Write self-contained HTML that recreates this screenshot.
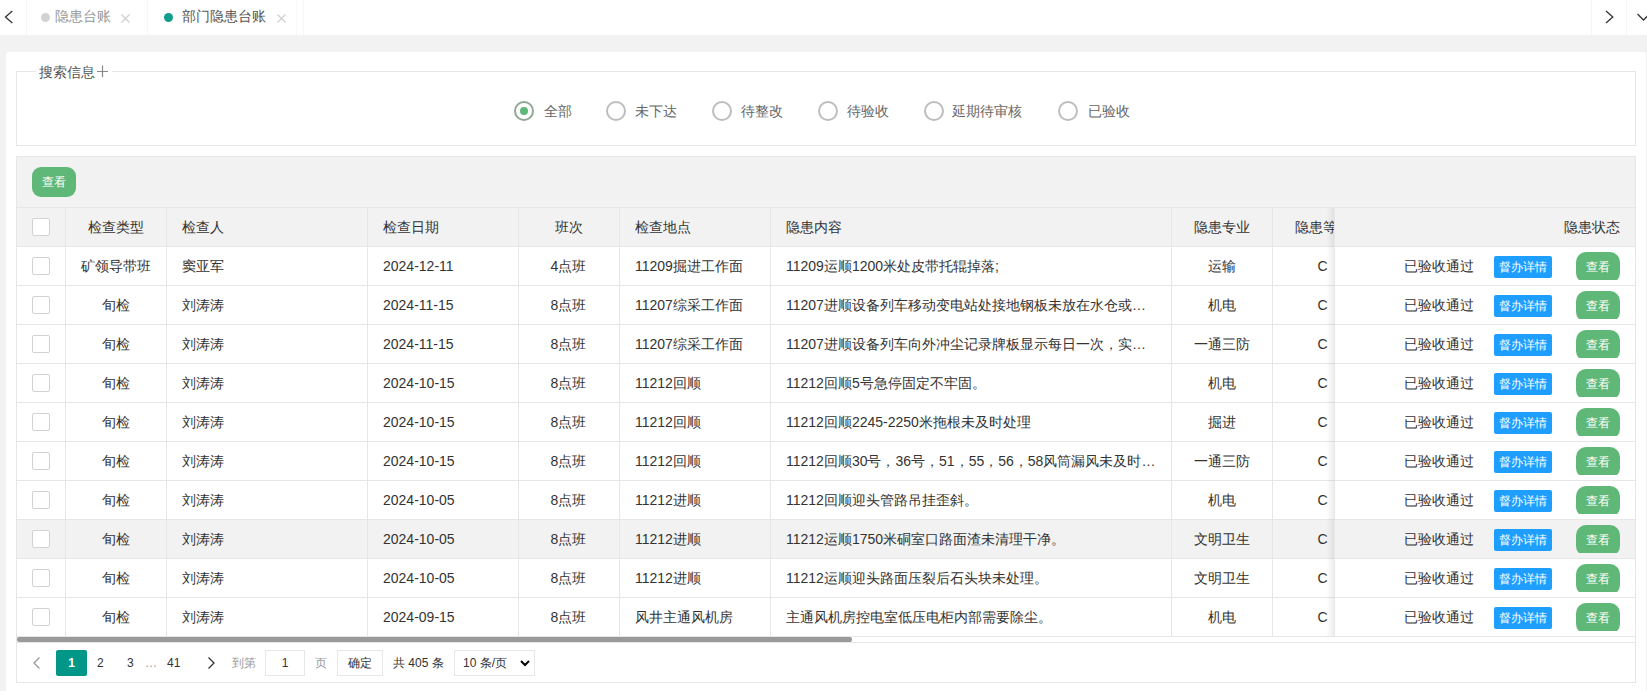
<!DOCTYPE html><html><head><meta charset="utf-8"><title>隐患台账</title><style>
*{box-sizing:border-box;margin:0;padding:0}
html,body{width:1647px;height:691px;overflow:hidden;background:#f2f2f2;font-family:"Liberation Sans",sans-serif;color:#333}
.a{position:absolute}
#tabs{left:0;top:0;width:1647px;height:35px;background:#fff}
.vl{position:absolute;top:0;width:1px;height:35px;background:#f6f6f6}
.dot{position:absolute;width:9px;height:9px;border-radius:50%}
.tt{position:absolute;top:8px;font-size:14px;line-height:17px;white-space:nowrap}
#card{left:6px;top:52px;width:1640px;height:660px;background:#fff;border-radius:3px}
#fs{left:16px;top:71px;width:1620px;height:75px;border:1px solid #e6e6e6}
#lg{left:36px;top:63px;height:18px;padding:0 3px;background:#fff;font-size:14px;line-height:18px;color:#555;white-space:nowrap}
.rd{position:absolute;top:101px;width:20px;height:20px;border:2px solid #bdbdbd;border-radius:50%}
.rd.on{border-color:#90a894}
.rd.on:after{content:"";position:absolute;left:50%;top:50%;width:8px;height:8px;margin:-4px 0 0 -4px;border-radius:50%;background:#5fb878}
.rt{position:absolute;top:103px;font-size:14px;line-height:17px;color:#666;white-space:nowrap}
#tbl{left:16px;top:156px;width:1620px;height:527px;border:1px solid #e6e6e6;background:#fff;overflow:hidden}
#tool{left:0;top:0;width:1618px;height:51px;background:#f2f2f2;border-bottom:1px solid #e6e6e6}
.gbtn{position:absolute;background:#5fb878;color:#fff;font-size:12px;text-align:center;border-radius:9px;font-weight:500}
.clip{position:absolute;overflow:hidden}
.bbtn{position:absolute;background:#1e9fff;color:#fff;font-size:12px;text-align:center;border-radius:2px;font-weight:500}
.cl{position:absolute;width:1px;background:#e6e6e6}
.hl{position:absolute;height:1px;background:#e6e6e6}
.c{position:absolute;font-size:14px;line-height:17px;white-space:nowrap;color:#333}
.cb{position:absolute;width:18px;height:18px;border:1px solid #d2d2d2;background:#fff;border-radius:2px}
i{font-style:normal;display:inline-block;width:1em;text-align:center}
.pg{position:absolute;font-size:12px;line-height:14px;white-space:nowrap;color:#333}
</style></head><body>
<div id="tabs" class="a">
<svg class="a" style="left:0;top:0" width="26" height="35"><path d="M12.3 11 L5.5 17 L12.3 23" fill="none" stroke="#333" stroke-width="1.3"/></svg>
<div class="vl" style="left:26px"></div>
<div class="dot" style="left:41px;top:13px;background:#d2d2d2"></div>
<div class="tt" style="left:55px;color:#999"><i>隐</i><i>患</i><i>台</i><i>账</i></div>
<svg class="a" style="left:120px;top:13px" width="11" height="11"><path d="M1.5 1.5 L9.5 9.5 M9.5 1.5 L1.5 9.5" stroke="#cfcfcf" stroke-width="1.2"/></svg>
<div class="vl" style="left:147px"></div>
<div class="dot" style="left:164px;top:13px;background:#149c8c"></div>
<div class="tt" style="left:182px;color:#555"><i>部</i><i>门</i><i>隐</i><i>患</i><i>台</i><i>账</i></div>
<svg class="a" style="left:276px;top:13px" width="11" height="11"><path d="M1.5 1.5 L9.5 9.5 M9.5 1.5 L1.5 9.5" stroke="#cfcfcf" stroke-width="1.2"/></svg>
<div class="vl" style="left:296px;background:#f8f8f8"></div>
<div class="vl" style="left:303px"></div>
<div class="vl" style="left:1591px"></div>
<svg class="a" style="left:1600px;top:0" width="20" height="35"><path d="M6 11 L12.8 17 L6 23" fill="none" stroke="#333" stroke-width="1.3"/></svg>
<div class="vl" style="left:1626px"></div>
<svg class="a" style="left:1630px;top:0" width="17" height="35"><path d="M7.5 14 L13.5 20 L19.5 14" fill="none" stroke="#333" stroke-width="1.3"/></svg>
</div>
<div id="card" class="a"></div>
<div id="fs" class="a"></div>
<div id="lg" class="a"><i>搜</i><i>索</i><i>信</i><i>息</i></div>
<div class="a" style="left:95px;top:63px;width:17px;height:16px;background:#fff"></div>
<svg class="a" style="left:96px;top:65px" width="13" height="13"><path d="M6.5 0.5 V12 M1 6.5 H12" stroke="#888" stroke-width="1.2"/></svg>
<div class="rd on" style="left:514.0px"></div>
<div class="rt" style="left:543.7px"><i>全</i><i>部</i></div>
<div class="rd" style="left:606.0px"></div>
<div class="rt" style="left:635.4px"><i>未</i><i>下</i><i>达</i></div>
<div class="rd" style="left:711.5px"></div>
<div class="rt" style="left:741.0px"><i>待</i><i>整</i><i>改</i></div>
<div class="rd" style="left:818.0px"></div>
<div class="rt" style="left:847.2px"><i>待</i><i>验</i><i>收</i></div>
<div class="rd" style="left:923.5px"></div>
<div class="rt" style="left:952.4px"><i>延</i><i>期</i><i>待</i><i>审</i><i>核</i></div>
<div class="rd" style="left:1057.5px"></div>
<div class="rt" style="left:1087.7px"><i>已</i><i>验</i><i>收</i></div>
<div id="tbl" class="a">
<div id="tool" class="a"></div>
<div class="gbtn" style="left:15px;top:10px;width:44px;height:30px;line-height:30px"><i>查</i><i>看</i></div>
<div class="a" style="left:0;top:51px;width:1618px;height:38px;background:#f2f2f2"></div>
<div class="a" style="left:0;top:362px;width:1618px;height:39px;background:#f2f2f2"></div>
<div class="hl" style="left:0;top:89px;width:1618px"></div>
<div class="hl" style="left:0;top:128px;width:1618px"></div>
<div class="hl" style="left:0;top:167px;width:1618px"></div>
<div class="hl" style="left:0;top:206px;width:1618px"></div>
<div class="hl" style="left:0;top:245px;width:1618px"></div>
<div class="hl" style="left:0;top:284px;width:1618px"></div>
<div class="hl" style="left:0;top:323px;width:1618px"></div>
<div class="hl" style="left:0;top:362px;width:1618px"></div>
<div class="hl" style="left:0;top:401px;width:1618px"></div>
<div class="hl" style="left:0;top:440px;width:1618px"></div>
<div class="hl" style="left:0;top:479px;width:1618px"></div>
<div class="cl" style="left:48px;top:50px;height:429px"></div>
<div class="cl" style="left:149px;top:50px;height:429px"></div>
<div class="cl" style="left:350px;top:50px;height:429px"></div>
<div class="cl" style="left:501px;top:50px;height:429px"></div>
<div class="cl" style="left:602px;top:50px;height:429px"></div>
<div class="cl" style="left:753px;top:50px;height:429px"></div>
<div class="cl" style="left:1154px;top:50px;height:429px"></div>
<div class="cl" style="left:1255px;top:50px;height:429px"></div>
<div class="cl" style="left:1356px;top:50px;height:429px"></div>
<div class="cb" style="left:15px;top:61px"></div>
<div class="c" style="left:49px;top:62px;width:100px;text-align:center"><i>检</i><i>查</i><i>类</i><i>型</i></div>
<div class="c" style="left:165px;top:62px;"><i>检</i><i>查</i><i>人</i></div>
<div class="c" style="left:366px;top:62px;"><i>检</i><i>查</i><i>日</i><i>期</i></div>
<div class="c" style="left:501px;top:62px;width:101px;text-align:center"><i>班</i><i>次</i></div>
<div class="c" style="left:618px;top:62px;"><i>检</i><i>查</i><i>地</i><i>点</i></div>
<div class="c" style="left:769px;top:62px;"><i>隐</i><i>患</i><i>内</i><i>容</i></div>
<div class="c" style="left:1154px;top:62px;width:101px;text-align:center"><i>隐</i><i>患</i><i>专</i><i>业</i></div>
<div class="c" style="left:1255px;top:62px;width:101px;text-align:center"><i>隐</i><i>患</i><i>等</i><i>级</i></div>
<div class="cb" style="left:15px;top:100px"></div>
<div class="c" style="left:49px;top:101px;width:100px;text-align:center"><i>矿</i><i>领</i><i>导</i><i>带</i><i>班</i></div>
<div class="c" style="left:165px;top:101px;"><i>窦</i><i>亚</i><i>军</i></div>
<div class="c" style="left:366px;top:101px;">2024-12-11</div>
<div class="c" style="left:501px;top:101px;width:101px;text-align:center">4<i>点</i><i>班</i></div>
<div class="c" style="left:618px;top:101px;">11209<i>掘</i><i>进</i><i>工</i><i>作</i><i>面</i></div>
<div class="c" style="left:769px;top:101px;">11209<i>运</i><i>顺</i>1200<i>米</i><i>处</i><i>皮</i><i>带</i><i>托</i><i>辊</i><i>掉</i><i>落</i>;</div>
<div class="c" style="left:1154px;top:101px;width:101px;text-align:center"><i>运</i><i>输</i></div>
<div class="c" style="left:1255px;top:101px;width:101px;text-align:center">C</div>
<div class="cb" style="left:15px;top:139px"></div>
<div class="c" style="left:49px;top:140px;width:100px;text-align:center"><i>旬</i><i>检</i></div>
<div class="c" style="left:165px;top:140px;"><i>刘</i><i>涛</i><i>涛</i></div>
<div class="c" style="left:366px;top:140px;">2024-11-15</div>
<div class="c" style="left:501px;top:140px;width:101px;text-align:center">8<i>点</i><i>班</i></div>
<div class="c" style="left:618px;top:140px;">11207<i>综</i><i>采</i><i>工</i><i>作</i><i>面</i></div>
<div class="c" style="left:769px;top:140px;">11207<i>进</i><i>顺</i><i>设</i><i>备</i><i>列</i><i>车</i><i>移</i><i>动</i><i>变</i><i>电</i><i>站</i><i>处</i><i>接</i><i>地</i><i>钢</i><i>板</i><i>未</i><i>放</i><i>在</i><i>水</i><i>仓</i><i>或</i>…</div>
<div class="c" style="left:1154px;top:140px;width:101px;text-align:center"><i>机</i><i>电</i></div>
<div class="c" style="left:1255px;top:140px;width:101px;text-align:center">C</div>
<div class="cb" style="left:15px;top:178px"></div>
<div class="c" style="left:49px;top:179px;width:100px;text-align:center"><i>旬</i><i>检</i></div>
<div class="c" style="left:165px;top:179px;"><i>刘</i><i>涛</i><i>涛</i></div>
<div class="c" style="left:366px;top:179px;">2024-11-15</div>
<div class="c" style="left:501px;top:179px;width:101px;text-align:center">8<i>点</i><i>班</i></div>
<div class="c" style="left:618px;top:179px;">11207<i>综</i><i>采</i><i>工</i><i>作</i><i>面</i></div>
<div class="c" style="left:769px;top:179px;">11207<i>进</i><i>顺</i><i>设</i><i>备</i><i>列</i><i>车</i><i>向</i><i>外</i><i>冲</i><i>尘</i><i>记</i><i>录</i><i>牌</i><i>板</i><i>显</i><i>示</i><i>每</i><i>日</i><i>一</i><i>次</i><i>，</i><i>实</i>…</div>
<div class="c" style="left:1154px;top:179px;width:101px;text-align:center"><i>一</i><i>通</i><i>三</i><i>防</i></div>
<div class="c" style="left:1255px;top:179px;width:101px;text-align:center">C</div>
<div class="cb" style="left:15px;top:217px"></div>
<div class="c" style="left:49px;top:218px;width:100px;text-align:center"><i>旬</i><i>检</i></div>
<div class="c" style="left:165px;top:218px;"><i>刘</i><i>涛</i><i>涛</i></div>
<div class="c" style="left:366px;top:218px;">2024-10-15</div>
<div class="c" style="left:501px;top:218px;width:101px;text-align:center">8<i>点</i><i>班</i></div>
<div class="c" style="left:618px;top:218px;">11212<i>回</i><i>顺</i></div>
<div class="c" style="left:769px;top:218px;">11212<i>回</i><i>顺</i>5<i>号</i><i>急</i><i>停</i><i>固</i><i>定</i><i>不</i><i>牢</i><i>固</i><i>。</i></div>
<div class="c" style="left:1154px;top:218px;width:101px;text-align:center"><i>机</i><i>电</i></div>
<div class="c" style="left:1255px;top:218px;width:101px;text-align:center">C</div>
<div class="cb" style="left:15px;top:256px"></div>
<div class="c" style="left:49px;top:257px;width:100px;text-align:center"><i>旬</i><i>检</i></div>
<div class="c" style="left:165px;top:257px;"><i>刘</i><i>涛</i><i>涛</i></div>
<div class="c" style="left:366px;top:257px;">2024-10-15</div>
<div class="c" style="left:501px;top:257px;width:101px;text-align:center">8<i>点</i><i>班</i></div>
<div class="c" style="left:618px;top:257px;">11212<i>回</i><i>顺</i></div>
<div class="c" style="left:769px;top:257px;">11212<i>回</i><i>顺</i>2245-2250<i>米</i><i>拖</i><i>根</i><i>未</i><i>及</i><i>时</i><i>处</i><i>理</i></div>
<div class="c" style="left:1154px;top:257px;width:101px;text-align:center"><i>掘</i><i>进</i></div>
<div class="c" style="left:1255px;top:257px;width:101px;text-align:center">C</div>
<div class="cb" style="left:15px;top:295px"></div>
<div class="c" style="left:49px;top:296px;width:100px;text-align:center"><i>旬</i><i>检</i></div>
<div class="c" style="left:165px;top:296px;"><i>刘</i><i>涛</i><i>涛</i></div>
<div class="c" style="left:366px;top:296px;">2024-10-15</div>
<div class="c" style="left:501px;top:296px;width:101px;text-align:center">8<i>点</i><i>班</i></div>
<div class="c" style="left:618px;top:296px;">11212<i>回</i><i>顺</i></div>
<div class="c" style="left:769px;top:296px;">11212<i>回</i><i>顺</i>30<i>号</i><i>，</i>36<i>号</i><i>，</i>51<i>，</i>55<i>，</i>56<i>，</i>58<i>风</i><i>筒</i><i>漏</i><i>风</i><i>未</i><i>及</i><i>时</i>…</div>
<div class="c" style="left:1154px;top:296px;width:101px;text-align:center"><i>一</i><i>通</i><i>三</i><i>防</i></div>
<div class="c" style="left:1255px;top:296px;width:101px;text-align:center">C</div>
<div class="cb" style="left:15px;top:334px"></div>
<div class="c" style="left:49px;top:335px;width:100px;text-align:center"><i>旬</i><i>检</i></div>
<div class="c" style="left:165px;top:335px;"><i>刘</i><i>涛</i><i>涛</i></div>
<div class="c" style="left:366px;top:335px;">2024-10-05</div>
<div class="c" style="left:501px;top:335px;width:101px;text-align:center">8<i>点</i><i>班</i></div>
<div class="c" style="left:618px;top:335px;">11212<i>进</i><i>顺</i></div>
<div class="c" style="left:769px;top:335px;">11212<i>回</i><i>顺</i><i>迎</i><i>头</i><i>管</i><i>路</i><i>吊</i><i>挂</i><i>歪</i><i>斜</i><i>。</i></div>
<div class="c" style="left:1154px;top:335px;width:101px;text-align:center"><i>机</i><i>电</i></div>
<div class="c" style="left:1255px;top:335px;width:101px;text-align:center">C</div>
<div class="cb" style="left:15px;top:373px"></div>
<div class="c" style="left:49px;top:374px;width:100px;text-align:center"><i>旬</i><i>检</i></div>
<div class="c" style="left:165px;top:374px;"><i>刘</i><i>涛</i><i>涛</i></div>
<div class="c" style="left:366px;top:374px;">2024-10-05</div>
<div class="c" style="left:501px;top:374px;width:101px;text-align:center">8<i>点</i><i>班</i></div>
<div class="c" style="left:618px;top:374px;">11212<i>进</i><i>顺</i></div>
<div class="c" style="left:769px;top:374px;">11212<i>运</i><i>顺</i>1750<i>米</i><i>硐</i><i>室</i><i>口</i><i>路</i><i>面</i><i>渣</i><i>未</i><i>清</i><i>理</i><i>干</i><i>净</i><i>。</i></div>
<div class="c" style="left:1154px;top:374px;width:101px;text-align:center"><i>文</i><i>明</i><i>卫</i><i>生</i></div>
<div class="c" style="left:1255px;top:374px;width:101px;text-align:center">C</div>
<div class="cb" style="left:15px;top:412px"></div>
<div class="c" style="left:49px;top:413px;width:100px;text-align:center"><i>旬</i><i>检</i></div>
<div class="c" style="left:165px;top:413px;"><i>刘</i><i>涛</i><i>涛</i></div>
<div class="c" style="left:366px;top:413px;">2024-10-05</div>
<div class="c" style="left:501px;top:413px;width:101px;text-align:center">8<i>点</i><i>班</i></div>
<div class="c" style="left:618px;top:413px;">11212<i>进</i><i>顺</i></div>
<div class="c" style="left:769px;top:413px;">11212<i>运</i><i>顺</i><i>迎</i><i>头</i><i>路</i><i>面</i><i>压</i><i>裂</i><i>后</i><i>石</i><i>头</i><i>块</i><i>未</i><i>处</i><i>理</i><i>。</i></div>
<div class="c" style="left:1154px;top:413px;width:101px;text-align:center"><i>文</i><i>明</i><i>卫</i><i>生</i></div>
<div class="c" style="left:1255px;top:413px;width:101px;text-align:center">C</div>
<div class="cb" style="left:15px;top:451px"></div>
<div class="c" style="left:49px;top:452px;width:100px;text-align:center"><i>旬</i><i>检</i></div>
<div class="c" style="left:165px;top:452px;"><i>刘</i><i>涛</i><i>涛</i></div>
<div class="c" style="left:366px;top:452px;">2024-09-15</div>
<div class="c" style="left:501px;top:452px;width:101px;text-align:center">8<i>点</i><i>班</i></div>
<div class="c" style="left:618px;top:452px;"><i>风</i><i>井</i><i>主</i><i>通</i><i>风</i><i>机</i><i>房</i></div>
<div class="c" style="left:769px;top:452px;"><i>主</i><i>通</i><i>风</i><i>机</i><i>房</i><i>控</i><i>电</i><i>室</i><i>低</i><i>压</i><i>电</i><i>柜</i><i>内</i><i>部</i><i>需</i><i>要</i><i>除</i><i>尘</i><i>。</i></div>
<div class="c" style="left:1154px;top:452px;width:101px;text-align:center"><i>机</i><i>电</i></div>
<div class="c" style="left:1255px;top:452px;width:101px;text-align:center">C</div>
<div class="a" style="left:1317px;top:51px;width:301px;height:428px;background:#fff"></div>
<div class="a" style="left:1309px;top:51px;width:8px;height:428px;background:linear-gradient(to left,rgba(0,0,0,.07),rgba(0,0,0,0))"></div>
<div class="a" style="left:1317px;top:51px;width:301px;height:38px;background:#f2f2f2"></div>
<div class="a" style="left:1317px;top:362px;width:301px;height:39px;background:#f2f2f2"></div>
<div class="hl" style="left:1317px;top:89px;width:301px"></div>
<div class="hl" style="left:1317px;top:128px;width:301px"></div>
<div class="hl" style="left:1317px;top:167px;width:301px"></div>
<div class="hl" style="left:1317px;top:206px;width:301px"></div>
<div class="hl" style="left:1317px;top:245px;width:301px"></div>
<div class="hl" style="left:1317px;top:284px;width:301px"></div>
<div class="hl" style="left:1317px;top:323px;width:301px"></div>
<div class="hl" style="left:1317px;top:362px;width:301px"></div>
<div class="hl" style="left:1317px;top:401px;width:301px"></div>
<div class="hl" style="left:1317px;top:440px;width:301px"></div>
<div class="hl" style="left:1317px;top:479px;width:301px"></div>
<div class="cl" style="left:1317px;top:50px;height:429px"></div>
<div class="c" style="left:1317px;top:62px;width:286px;text-align:right"><i>隐</i><i>患</i><i>状</i><i>态</i></div>
<div class="c" style="left:1317px;top:101px;width:140px;text-align:right"><i>已</i><i>验</i><i>收</i><i>通</i><i>过</i></div>
<div class="bbtn" style="left:1477px;top:99px;width:58px;height:22px;line-height:22px"><i>督</i><i>办</i><i>详</i><i>情</i></div>
<div class="clip" style="left:1559px;top:95px;width:44px;height:28px"><div class="gbtn" style="left:0;top:0;width:44px;height:31px;line-height:31px;border-radius:10px"><i>查</i><i>看</i></div></div>
<div class="c" style="left:1317px;top:140px;width:140px;text-align:right"><i>已</i><i>验</i><i>收</i><i>通</i><i>过</i></div>
<div class="bbtn" style="left:1477px;top:138px;width:58px;height:22px;line-height:22px"><i>督</i><i>办</i><i>详</i><i>情</i></div>
<div class="clip" style="left:1559px;top:134px;width:44px;height:28px"><div class="gbtn" style="left:0;top:0;width:44px;height:31px;line-height:31px;border-radius:10px"><i>查</i><i>看</i></div></div>
<div class="c" style="left:1317px;top:179px;width:140px;text-align:right"><i>已</i><i>验</i><i>收</i><i>通</i><i>过</i></div>
<div class="bbtn" style="left:1477px;top:177px;width:58px;height:22px;line-height:22px"><i>督</i><i>办</i><i>详</i><i>情</i></div>
<div class="clip" style="left:1559px;top:173px;width:44px;height:28px"><div class="gbtn" style="left:0;top:0;width:44px;height:31px;line-height:31px;border-radius:10px"><i>查</i><i>看</i></div></div>
<div class="c" style="left:1317px;top:218px;width:140px;text-align:right"><i>已</i><i>验</i><i>收</i><i>通</i><i>过</i></div>
<div class="bbtn" style="left:1477px;top:216px;width:58px;height:22px;line-height:22px"><i>督</i><i>办</i><i>详</i><i>情</i></div>
<div class="clip" style="left:1559px;top:212px;width:44px;height:28px"><div class="gbtn" style="left:0;top:0;width:44px;height:31px;line-height:31px;border-radius:10px"><i>查</i><i>看</i></div></div>
<div class="c" style="left:1317px;top:257px;width:140px;text-align:right"><i>已</i><i>验</i><i>收</i><i>通</i><i>过</i></div>
<div class="bbtn" style="left:1477px;top:255px;width:58px;height:22px;line-height:22px"><i>督</i><i>办</i><i>详</i><i>情</i></div>
<div class="clip" style="left:1559px;top:251px;width:44px;height:28px"><div class="gbtn" style="left:0;top:0;width:44px;height:31px;line-height:31px;border-radius:10px"><i>查</i><i>看</i></div></div>
<div class="c" style="left:1317px;top:296px;width:140px;text-align:right"><i>已</i><i>验</i><i>收</i><i>通</i><i>过</i></div>
<div class="bbtn" style="left:1477px;top:294px;width:58px;height:22px;line-height:22px"><i>督</i><i>办</i><i>详</i><i>情</i></div>
<div class="clip" style="left:1559px;top:290px;width:44px;height:28px"><div class="gbtn" style="left:0;top:0;width:44px;height:31px;line-height:31px;border-radius:10px"><i>查</i><i>看</i></div></div>
<div class="c" style="left:1317px;top:335px;width:140px;text-align:right"><i>已</i><i>验</i><i>收</i><i>通</i><i>过</i></div>
<div class="bbtn" style="left:1477px;top:333px;width:58px;height:22px;line-height:22px"><i>督</i><i>办</i><i>详</i><i>情</i></div>
<div class="clip" style="left:1559px;top:329px;width:44px;height:28px"><div class="gbtn" style="left:0;top:0;width:44px;height:31px;line-height:31px;border-radius:10px"><i>查</i><i>看</i></div></div>
<div class="c" style="left:1317px;top:374px;width:140px;text-align:right"><i>已</i><i>验</i><i>收</i><i>通</i><i>过</i></div>
<div class="bbtn" style="left:1477px;top:372px;width:58px;height:22px;line-height:22px"><i>督</i><i>办</i><i>详</i><i>情</i></div>
<div class="clip" style="left:1559px;top:368px;width:44px;height:28px"><div class="gbtn" style="left:0;top:0;width:44px;height:31px;line-height:31px;border-radius:10px"><i>查</i><i>看</i></div></div>
<div class="c" style="left:1317px;top:413px;width:140px;text-align:right"><i>已</i><i>验</i><i>收</i><i>通</i><i>过</i></div>
<div class="bbtn" style="left:1477px;top:411px;width:58px;height:22px;line-height:22px"><i>督</i><i>办</i><i>详</i><i>情</i></div>
<div class="clip" style="left:1559px;top:407px;width:44px;height:28px"><div class="gbtn" style="left:0;top:0;width:44px;height:31px;line-height:31px;border-radius:10px"><i>查</i><i>看</i></div></div>
<div class="c" style="left:1317px;top:452px;width:140px;text-align:right"><i>已</i><i>验</i><i>收</i><i>通</i><i>过</i></div>
<div class="bbtn" style="left:1477px;top:450px;width:58px;height:22px;line-height:22px"><i>督</i><i>办</i><i>详</i><i>情</i></div>
<div class="clip" style="left:1559px;top:446px;width:44px;height:28px"><div class="gbtn" style="left:0;top:0;width:44px;height:31px;line-height:31px;border-radius:10px"><i>查</i><i>看</i></div></div>
<div class="a" style="left:0;top:480px;width:1618px;height:5px;background:#fff"></div>
<div class="a" style="left:0;top:480px;width:835px;height:5px;background:#9a9a9a;border-radius:2px"></div>
<div class="hl" style="left:0;top:485px;width:1618px"></div>
<svg class="a" style="left:14px;top:493px" width="12" height="26"><path d="M8.5 7.5 L3 13 L8.5 18.5" fill="none" stroke="#999" stroke-width="1.3"/></svg>
<div class="a" style="left:39px;top:493px;width:31px;height:26px;background:#009688;border-radius:2px;color:#fff;font-size:12px;font-weight:bold;line-height:26px;text-align:center">1</div>
<div class="pg" style="left:80px;top:499px">2</div>
<div class="pg" style="left:110px;top:499px">3</div>
<div class="pg" style="left:128px;top:499px;color:#999">…</div>
<div class="pg" style="left:150px;top:499px">41</div>
<svg class="a" style="left:188px;top:493px" width="12" height="26"><path d="M3.5 7.5 L9 13 L3.5 18.5" fill="none" stroke="#333" stroke-width="1.3"/></svg>
<div class="pg" style="left:215px;top:499px;color:#999"><i>到</i><i>第</i></div>
<div class="a" style="left:248px;top:493px;width:40px;height:26px;border:1px solid #e6e6e6;font-size:12px;line-height:24px;text-align:center">1</div>
<div class="pg" style="left:298px;top:499px;color:#999"><i>页</i></div>
<div class="a" style="left:320px;top:493px;width:46px;height:26px;border:1px solid #e6e6e6;font-size:12px;line-height:24px;text-align:center"><i>确</i><i>定</i></div>
<div class="pg" style="left:376px;top:499px"><i>共</i> 405 <i>条</i></div>
<div class="a" style="left:437px;top:493px;width:81px;height:26px;border:1px solid #e6e6e6;font-size:12px;line-height:24px;padding-left:8px">10 <i>条</i>/<i>页</i></div>
<svg class="a" style="left:502px;top:493px" width="12" height="26"><path d="M2 11 L6 15 L10 11" fill="none" stroke="#000" stroke-width="2"/></svg>
</div>
</body></html>
